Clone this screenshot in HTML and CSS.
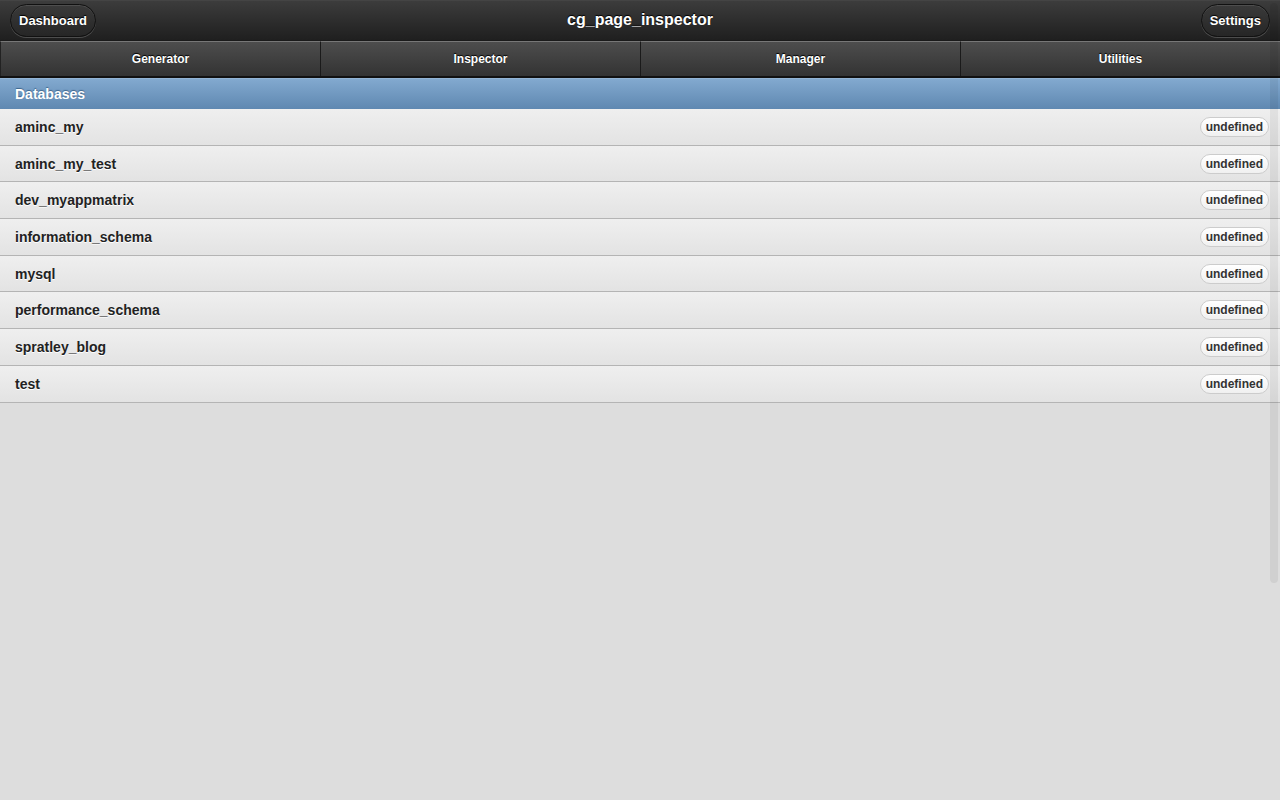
FILE: index.html
```html
<!DOCTYPE html>
<html>
<head>
<meta charset="utf-8">
<link rel="stylesheet" href="styles.css">
</head>
<body>
<div class="page">
  <header class="header">
    <a class="hbtn left">Dashboard</a>
    <h1 class="title">cg_page_inspector</h1>
    <a class="hbtn right">Settings</a>
  </header>
  <nav class="navbar">
    <a class="navitem">Generator</a>
    <a class="navitem">Inspector</a>
    <a class="navitem">Manager</a>
    <a class="navitem">Utilities</a>
  </nav>
  <ul class="list">
    <li class="divider">Databases</li>
    <li class="row"><span>aminc_my</span><span class="badge">undefined</span></li>
    <li class="row"><span>aminc_my_test</span><span class="badge">undefined</span></li>
    <li class="row"><span>dev_myappmatrix</span><span class="badge">undefined</span></li>
    <li class="row"><span>information_schema</span><span class="badge">undefined</span></li>
    <li class="row"><span>mysql</span><span class="badge">undefined</span></li>
    <li class="row"><span>performance_schema</span><span class="badge">undefined</span></li>
    <li class="row"><span>spratley_blog</span><span class="badge">undefined</span></li>
    <li class="row"><span>test</span><span class="badge">undefined</span></li>
  </ul>
  <div class="scrollbar"></div>
</div>
</body>
</html>
```
FILE: styles.css
```css
* { box-sizing: border-box; }
html, body { margin: 0; padding: 0; }
body {
  width: 1280px;
  height: 800px;
  background: #dddddd;
  font-family: "Liberation Sans", Arial, Helvetica, sans-serif;
  overflow: hidden;
}
.page { position: relative; height: 800px; }

.header {
  height: 41px;
  display: grid;
  grid-template-columns: 1fr auto 1fr;
  align-items: center;
  padding: 0 10px;
  background: linear-gradient(#3c3c3c, #1f1f1f);
  border-top: 1px solid #444;
  border-bottom: 1px solid #1a1a1a;
}
.title {
  margin: 0;
  color: #fff;
  font-size: 16px;
  font-weight: bold;
  text-shadow: 0 -1px 1px #000;
  margin-top: -2px;
}
.hbtn {
  display: inline-flex;
  align-items: center;
  height: 33px;
  padding: 0 8px;
  border-radius: 17px;
  border: 1px solid #111;
  background: linear-gradient(#3a3a3a, #262626);
  box-shadow: 0 1px 0 rgba(255,255,255,0.2), inset 0 1px 0 rgba(255,255,255,0.1);
  color: #fff;
  font-size: 13px;
  font-weight: bold;
  text-shadow: 0 -1px 1px #000;
  margin-top: -1px;
}
.hbtn.left { justify-self: start; }
.hbtn.right { justify-self: end; }

.navbar {
  display: grid;
  grid-template-columns: repeat(4, 1fr);
  height: 37px;
  border-bottom: 2px solid #111;
}
.navitem {
  display: flex;
  align-items: center;
  justify-content: center;
  background: linear-gradient(#4d4d4d, #333);
  border-top: 1px solid #777;
  border-left: 1px solid #1a1a1a;
  color: #fff;
  font-size: 12px;
  font-weight: bold;
  text-shadow: 0 -1px 1px #000;
}
.navitem:first-child { border-left: 1px solid #222; }

.list { list-style: none; margin: 0; padding: 0; }
.divider {
  height: 31px;
  display: flex;
  align-items: center;
  padding-left: 15px;
  background: linear-gradient(#82a9cf, #5f88b1);
  border-top: 1px solid #93b4d4;
  color: #fff;
  font-size: 14px;
  font-weight: bold;
  text-shadow: 0 -1px 1px #3d658c;
}
.row {
  height: 36.7px;
  display: flex;
  align-items: center;
  justify-content: space-between;
  padding: 0 11px 0 15px;
  background: linear-gradient(#efefef, #e3e3e3);
  border-bottom: 1px solid #b4b4b4;
  color: #222;
  font-size: 14px;
  font-weight: bold;
  text-shadow: 0 1px 0 #fff;
}
.badge {
  display: inline-flex;
  align-items: center;
  height: 20px;
  padding: 0 5px;
  border-radius: 10px;
  border: 1px solid #ccc;
  background: linear-gradient(#fff, #f0f0f0);
  color: #333;
  font-size: 12px;
  font-weight: bold;
}

.scrollbar {
  position: absolute;
  top: 3px;
  right: 2px;
  width: 8px;
  height: 580px;
  border-radius: 4px;
  background: rgba(0,0,0,0.06);
}
```
